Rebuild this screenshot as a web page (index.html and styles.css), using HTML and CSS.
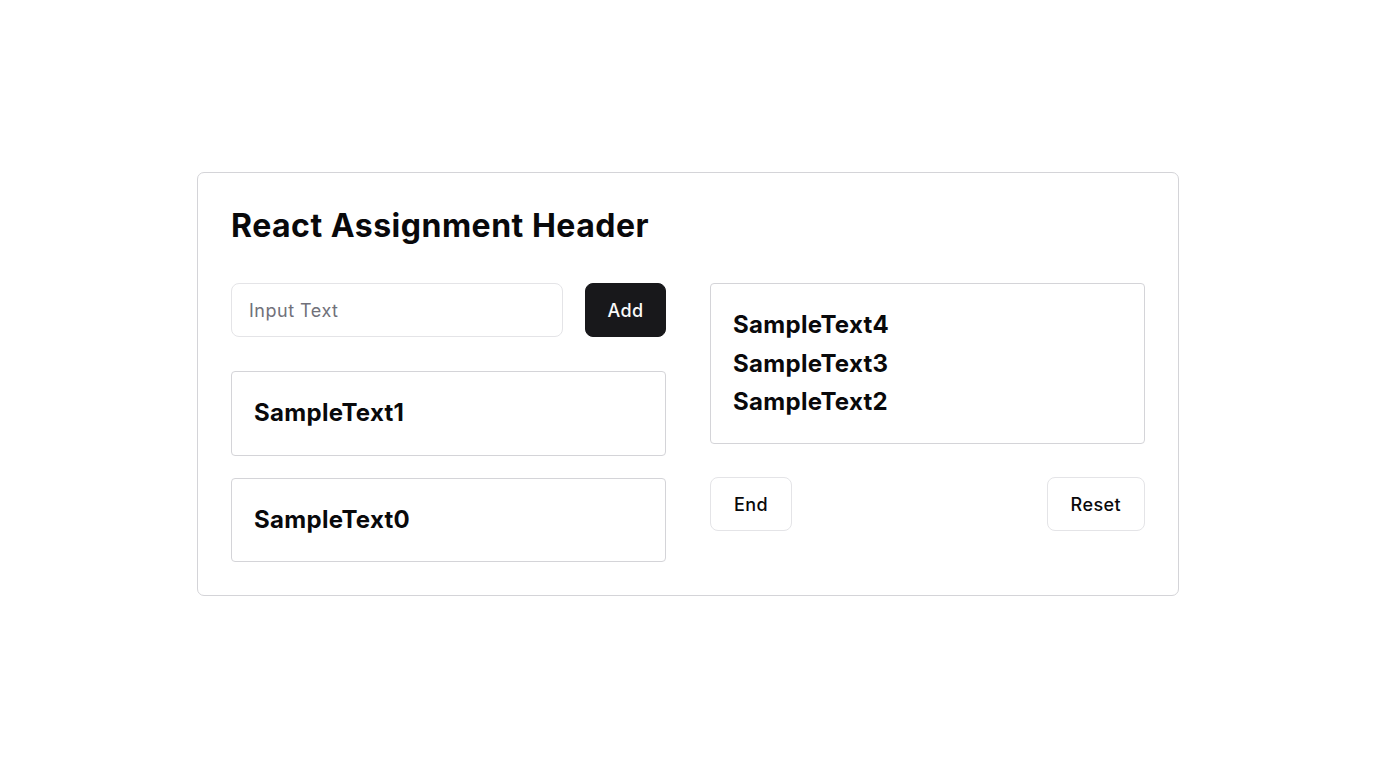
FILE: index.html
```html
<!DOCTYPE html>
<html lang="en">
<head>
<meta charset="utf-8">
<title>React Assignment</title>
<link rel="stylesheet" href="styles.css">
</head>
<body>
<main class="page">
  <section class="card">
    <h1 class="title">React Assignment Header</h1>
    <div class="columns">
      <div class="col">
        <div class="add-row">
          <input class="text-input" type="text" placeholder="Input Text">
          <button class="btn btn-dark">Add</button>
        </div>
        <div class="item-box"><p class="item">SampleText1</p></div>
        <div class="item-box"><p class="item">SampleText0</p></div>
      </div>
      <div class="col col-right">
        <div class="item-box">
          <p class="item">SampleText4</p>
          <p class="item">SampleText3</p>
          <p class="item">SampleText2</p>
        </div>
        <div class="btn-row">
          <button class="btn btn-light">End</button>
          <button class="btn btn-light">Reset</button>
        </div>
      </div>
    </div>
  </section>
</main>
</body>
</html>
```

FILE: styles.css
```css
* { box-sizing: border-box; }
html, body { margin: 0; padding: 0; background: #fff; }
body { font-family: Inter, "Noto Sans", sans-serif; color: #09090b; }
.page {
  height: 768px;
  display: flex;
  align-items: center;
  justify-content: center;
}
.card {
  width: 982px;
  border: 1px solid #d4d4d8;
  border-radius: 7px;
  padding: 33px;
  background: #fff;
}
.title {
  margin: 0 0 37px 0;
  font-size: 32px;
  line-height: 40px;
  font-weight: 700;
  letter-spacing: 0.5px;
  color: #09090b;
}
.columns {
  display: flex;
  gap: 44px;
}
.col {
  flex: 1 1 0;
  display: flex;
  flex-direction: column;
  gap: 22px;
}
.col-right { gap: 33px; }
.add-row {
  display: flex;
  gap: 22px;
  margin-bottom: 12px;
}
.text-input {
  flex: 1 1 auto;
  height: 54px;
  border: 1px solid #e4e4e7;
  border-radius: 8px;
  padding: 0 17px;
  font-family: inherit;
  font-size: 18px;
  letter-spacing: 0.5px;
  color: #09090b;
  outline: none;
  min-width: 0;
}
.text-input::placeholder { color: #71717a; }
.btn {
  height: 54px;
  border-radius: 8px;
  padding: 0 23px;
  font-family: inherit;
  font-size: 18px;
  font-weight: 500;
  letter-spacing: 0.4px;
  cursor: pointer;
}
.btn-dark {
  background: #18181b;
  color: #fafafa;
  border: 1px solid #18181b;
  width: 81px;
  padding: 0;
}
.btn-light {
  background: #fff;
  color: #09090b;
  border: 1px solid #e4e4e7;
}
.btn-row {
  display: flex;
  justify-content: space-between;
}
.item-box {
  border: 1px solid #d4d4d8;
  border-radius: 4px;
  padding: 22px 22px;
}
.item {
  margin: 0;
  font-size: 24px;
  line-height: 38.4px;
  font-weight: 700;
  letter-spacing: 0.3px;
  color: #09090b;
}
```
